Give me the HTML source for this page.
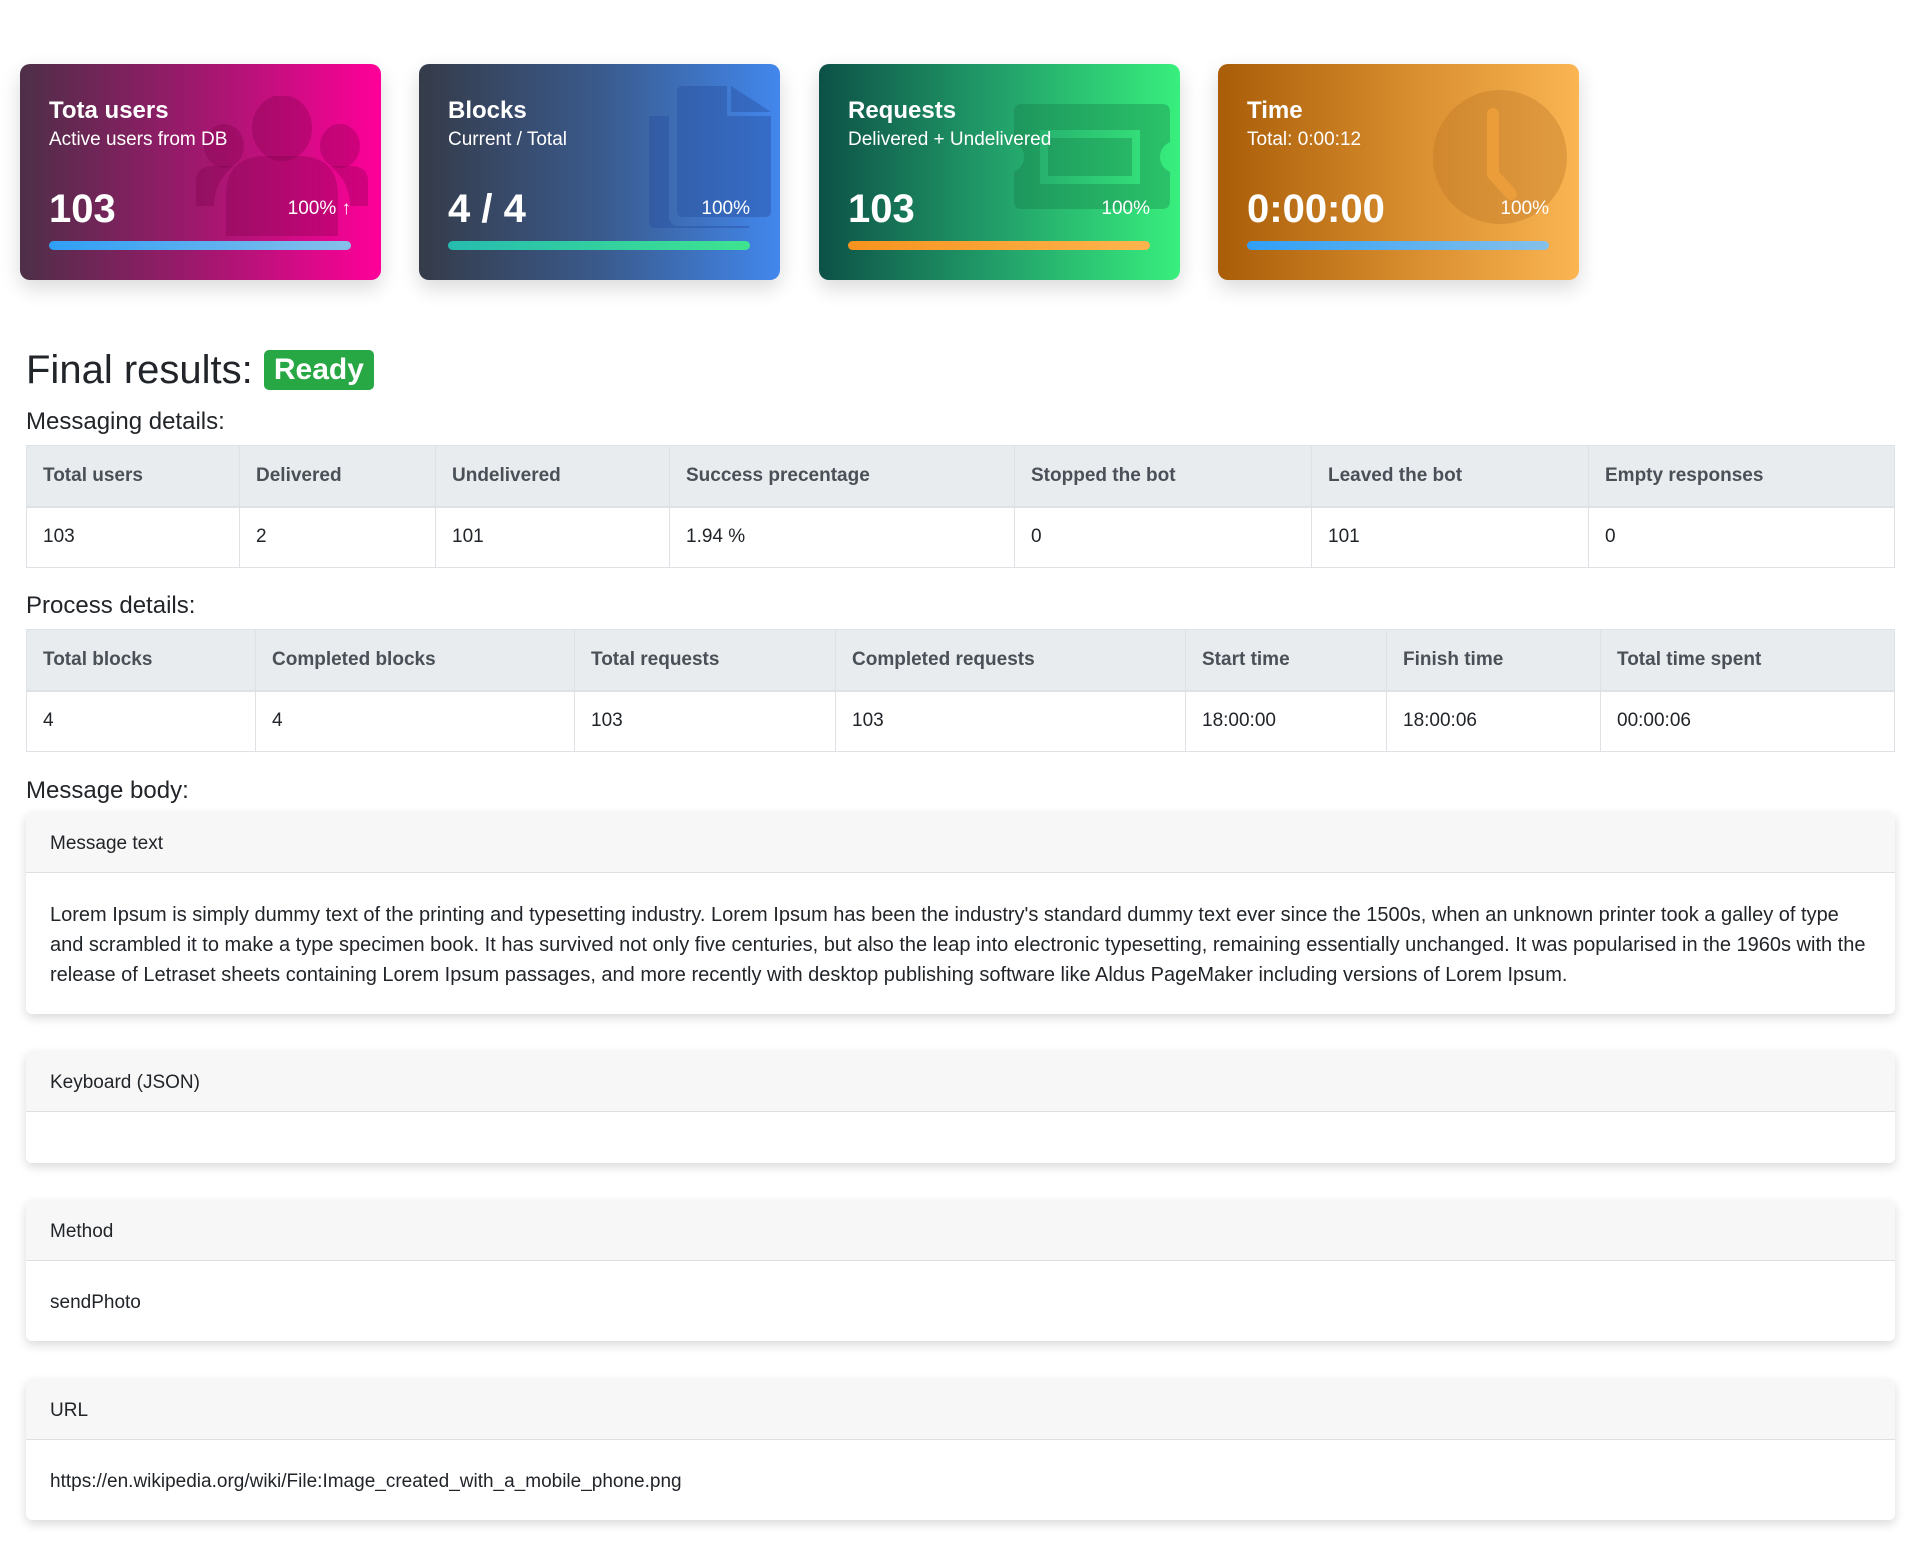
<!DOCTYPE html>
<html><head><meta charset="utf-8"><style>
*{box-sizing:border-box;margin:0;padding:0}
body{width:1920px;height:1558px;background:#fff;font-family:"Liberation Sans",sans-serif;color:#212529;position:relative;overflow:hidden}
.card{position:absolute;top:64px;width:361px;height:216px;border-radius:10px;color:#fff;box-shadow:0 8px 20px rgba(0,0,0,.15);overflow:hidden}
.card svg{position:absolute}
.card .t{position:absolute;left:29px;font-size:24px;font-weight:bold;top:33px}
.card .s{position:absolute;left:29px;top:65px;font-size:19px}
.card .n{position:absolute;left:29px;top:123px;font-size:40px;font-weight:600}
.card .p{position:absolute;right:30px;top:134px;font-size:19px}
.card .b{position:absolute;left:29px;right:30px;top:177px;height:9px;border-radius:5px}
h1{position:absolute;left:26px;top:348px;font-size:40px;font-weight:normal}
.badge{display:inline-block;background:#28a745;color:#fff;font-size:30px;font-weight:bold;padding:3px 10px;border-radius:5px;vertical-align:4px}
.lbl{position:absolute;left:26px;font-size:24px}
table{position:absolute;left:26px;width:1869px;border-collapse:collapse;font-size:19px}
td,th{border:1px solid #dee2e6;height:61px;padding:0 16px;text-align:left}
th{background:#e9ecef;color:#495057;font-weight:bold;border-bottom:2px solid #dee2e6}
.mc{position:absolute;left:26px;width:1869px;border-radius:6px;box-shadow:0 4px 10px rgba(0,0,0,.15);background:#fff;overflow:hidden;font-size:19px}
.mc .h{height:61px;background:#f7f7f7;border-bottom:1px solid #dfdfdf;padding:0 24px;line-height:64px}
.mc .c{padding:0 24px}
</style></head><body>

<div class="card" style="left:20px;background:linear-gradient(90deg,#4d2f47,#a0186e 50%,#ff0099)">
<svg style="left:176px;top:32px" width="172" height="140" viewBox="0 0 172 140"><g fill="rgba(120,0,70,.3)"><ellipse cx="86" cy="32" rx="30" ry="33"/><path d="M30 140V100q0-40 40-40h32q40 0 40 40v40z"/><ellipse cx="28" cy="50" rx="20" ry="22"/><ellipse cx="144" cy="50" rx="20" ry="22"/><path d="M0 110V85q0-15 18-15h20q-20 15-20 40z"/><path d="M172 110V85q0-15-18-15h-20q20 15 20 40z"/></g></svg>
<div class="t">Tota users</div><div class="s">Active users from DB</div><div class="n">103</div><div class="p">100% <b>&#8593;</b></div>
<div class="b" style="background:linear-gradient(90deg,#2f9ff5,#85c0ea)"></div></div>

<div class="card" style="left:419px;background:linear-gradient(90deg,#353b49,#3a5a8c 50%,#4287ed)">
<svg style="left:230px;top:22px" width="122" height="142" viewBox="0 0 122 142"><g fill="rgba(40,80,160,.45)"><path d="M0 30h20v100q0 10 10 10h70v2H6q-6 0-6-6z"/><path d="M28 6q0-6 6-6h44v30h44v95q0 6-6 6H34q-6 0-6-6z"/><path d="M82 0l40 26H82z"/></g></svg>
<div class="t">Blocks</div><div class="s">Current / Total</div><div class="n">4 / 4</div><div class="p">100%</div>
<div class="b" style="background:linear-gradient(90deg,#26bcb0,#3ee48f)"></div></div>

<div class="card" style="left:819px;background:linear-gradient(90deg,#0d5147,#22a06a 50%,#38ef7d)">
<svg style="left:195px;top:40px" width="156" height="105" viewBox="0 0 156 105"><path fill="rgba(20,120,70,.35)" fill-rule="evenodd" d="M8 0h140q8 0 8 8v30q-10 5-10 15t10 15v29q0 8-8 8H8q-8 0-8-8V68q10-5 10-15T0 38V8q0-8 8-8zM26 26v54h100V26zM34 34h84v38H34z"/></svg>
<div class="t">Requests</div><div class="s">Delivered + Undelivered</div><div class="n">103</div><div class="p">100%</div>
<div class="b" style="background:linear-gradient(90deg,#f7931e,#fdb44e)"></div></div>

<div class="card" style="left:1218px;background:linear-gradient(90deg,#a95d08,#d98e2f 55%,#fbb552)">
<svg style="left:215px;top:26px" width="134" height="134" viewBox="0 0 134 134"><circle cx="67" cy="67" r="67" fill="rgba(190,120,40,.4)"/><path d="M60 24v60l18 20" stroke="rgba(240,160,60,.8)" stroke-width="12" stroke-linecap="round" fill="none"/></svg>
<div class="t">Time</div><div class="s">Total: 0:00:12</div><div class="n">0:00:00</div><div class="p">100%</div>
<div class="b" style="background:linear-gradient(90deg,#2f9ff5,#85c0ea)"></div></div>

<h1>Final results: <span class="badge">Ready</span></h1>
<div class="lbl" style="top:408px">Messaging details:</div>
<table style="top:445px"><tr><th style="width:213px">Total users</th><th style="width:196px">Delivered</th><th style="width:234px">Undelivered</th><th style="width:345px">Success precentage</th><th style="width:297px">Stopped the bot</th><th style="width:277px">Leaved the bot</th><th>Empty responses</th></tr>
<tr><td>103</td><td>2</td><td>101</td><td>1.94 %</td><td>0</td><td>101</td><td>0</td></tr></table>

<div class="lbl" style="top:592px">Process details:</div>
<table style="top:629px"><tr><th style="width:229px">Total blocks</th><th style="width:319px">Completed blocks</th><th style="width:261px">Total requests</th><th style="width:350px">Completed requests</th><th style="width:201px">Start time</th><th style="width:214px">Finish time</th><th>Total time spent</th></tr>
<tr><td>4</td><td>4</td><td>103</td><td>103</td><td>18:00:00</td><td>18:00:06</td><td>00:00:06</td></tr></table>

<div class="lbl" style="top:777px">Message body:</div>
<div class="mc" style="top:812px;height:202px"><div class="h">Message text</div><div class="c" style="padding-top:27px;line-height:30px;font-size:20px">Lorem Ipsum is simply dummy text of the printing and typesetting industry. Lorem Ipsum has been the industry's standard dummy text ever since the 1500s, when an unknown printer took a galley of type and scrambled it to make a type specimen book. It has survived not only five centuries, but also the leap into electronic typesetting, remaining essentially unchanged. It was popularised in the 1960s with the release of Letraset sheets containing Lorem Ipsum passages, and more recently with desktop publishing software like Aldus PageMaker including versions of Lorem Ipsum.</div></div>
<div class="mc" style="top:1051px;height:112px"><div class="h">Keyboard (JSON)</div></div>
<div class="mc" style="top:1200px;height:141px"><div class="h">Method</div><div class="c" style="line-height:84px">sendPhoto</div></div>
<div class="mc" style="top:1379px;height:141px"><div class="h">URL</div><div class="c" style="line-height:84px">https://en.wikipedia.org/wiki/File:Image_created_with_a_mobile_phone.png</div></div>
</body></html>
